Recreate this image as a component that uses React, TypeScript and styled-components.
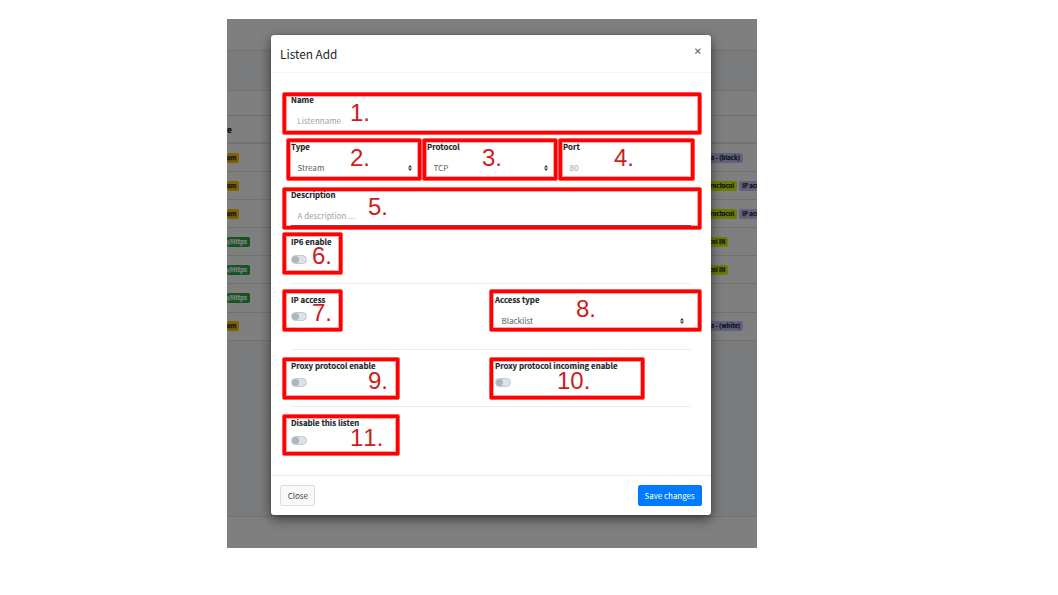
import React from "react";
import styled, { createGlobalStyle } from "styled-components";

const Global = createGlobalStyle`
  body { margin: 0; background: #fff; }
  *, *::before, *::after { box-sizing: border-box; }
`;

const Page = styled.main`
  height: 595px;
  padding: 19px 0 0 227px;
  overflow: hidden;
  font-family: "Noto Sans CJK SC", "Open Sans", sans-serif;
  color: #212529;
`;

const Screen = styled.div`
  position: relative;
  width: 530px;
  height: 529px;
  overflow: hidden;
  display: flex;
  flex-direction: column;
  background: #f4f6f9;
`;

const NavBar = styled.header`
  height: 32px;
  background: #fff;
  border-bottom: 1px solid #dee2e6;
`;

const Card = styled.section`
  margin-top: 39px;
  background: #fff;
  border-top: 1px solid #e6e6e6;
`;

const CardHeader = styled.div`
  height: 25px;
  border-bottom: 1px solid #dfdfdf;
`;

const TableHead = styled.div`
  height: 28px;
  padding-top: 3.4px;
  border-bottom: 2px solid #dee2e6;
  font-size: 8.2px;
  line-height: 20px;
  font-weight: 700;
  -webkit-text-stroke: 0.3px currentColor;
`;

const TableRow = styled.div`
  height: 28.1px;
  display: flex;
  justify-content: space-between;
  align-items: center;
  border-bottom: 1px solid #dee2e6;
`;

const TagList = styled.div`
  width: 50px;
  display: flex;
  gap: 2.5px;
`;

const Tag = styled.span<{ $bg: string; $fg?: string; $width: number }>`
  flex: none;
  display: flex;
  justify-content: flex-end;
  width: ${(p) => p.$width}px;
  height: 10px;
  padding-right: 2.6px;
  border-radius: 2px;
  background: ${(p) => p.$bg};
  color: ${(p) => p.$fg ?? "#1f2d3d"};
  font-size: 6px;
  line-height: 10.6px;
  font-weight: 700;
  -webkit-text-stroke: 0.25px currentColor;
  white-space: nowrap;
`;

const PageFooter = styled.footer`
  height: 32px;
  margin-top: auto;
  background: #fff;
  border-top: 1px solid #dee2e6;
`;

const Backdrop = styled.div`
  position: absolute;
  inset: 0;
  padding: 16px 46.4px 0 44.3px;
  background: rgba(0, 0, 0, 0.5);
`;

const Dialog = styled.div`
  height: 480px;
  display: flex;
  flex-direction: column;
  background: #fff;
  border-radius: 3px;
  box-shadow: 0 4px 12px rgba(0, 0, 0, 0.55), 0 0 1px rgba(0, 0, 0, 0.5);
`;

const DialogHeader = styled.div`
  height: 38px;
  padding: 8.6px 8.4px 0 8.7px;
  display: flex;
  justify-content: space-between;
  align-items: flex-start;
  border-bottom: 1px solid #f4f5f6;
`;

const Title = styled.h4`
  margin: 0;
  font-size: 11.8px;
  line-height: 20px;
  font-weight: 400;
`;

const CloseIcon = styled.button`
  margin: 0;
  padding: 0;
  border: 0;
  background: none;
  color: #666;
  font: 900 8.6px/14px "Noto Sans CJK SC", sans-serif;
`;

const Form = styled.form`
  flex: 1;
  padding: 20px 20px 0 19.7px;
`;

const Row = styled.div<{ $cols?: string; $height?: number }>`
  display: grid;
  grid-template-columns: ${(p) => p.$cols ?? "1fr"};
  column-gap: 8px;
  height: ${(p) => p.$height ?? 47.4}px;
`;

const Divider = styled.hr`
  height: 1px;
  margin: 0 0 9px;
  border: 0;
  background: #ececec;
`;

const Label = styled.label`
  display: block;
  height: 17px;
  font-size: 7.88px;
  line-height: 14px;
  font-weight: 700;
  -webkit-text-stroke: 0.15px currentColor;
  white-space: nowrap;
`;

const Control = styled.div<{ $placeholder?: boolean; $underline?: boolean }>`
  height: 21.3px;
  padding: 1.3px 7px 0 6.5px;
  display: flex;
  justify-content: space-between;
  align-items: center;
  border-bottom: 1px solid ${(p) => (p.$underline ? "#5d5f78" : "transparent")};
  font-size: 8px;
  line-height: 20px;
  color: ${(p) => (p.$placeholder ? "#9aa1a8" : "#565d64")};
`;

const Toggle = styled.span`
  display: block;
  width: 16px;
  height: 9px;
  margin-top: 2.4px;
  border-radius: 5px;
  background: #dee2e6;
  border: 1px solid #c3c9cf;
  &::before {
    content: "";
    display: block;
    width: 7px;
    height: 7px;
    border-radius: 50%;
    background: #adb5bd;
  }
`;

const DialogFooter = styled.div`
  height: 40px;
  padding: 9px 9px 0;
  display: flex;
  justify-content: space-between;
  align-items: flex-start;
  border-top: 1px solid #e9ecef;
`;

const Button = styled.button<{ $primary?: boolean }>`
  width: ${(p) => (p.$primary ? 64 : 35)}px;
  height: 21px;
  padding: 0;
  border: 1px solid ${(p) => (p.$primary ? "#007bff" : "#ddd")};
  border-radius: 2px;
  background: ${(p) => (p.$primary ? "#007bff" : "#f8f9fa")};
  color: ${(p) => (p.$primary ? "#fff" : "#444")};
  font: 400 7.95px/18px "Noto Sans CJK SC", sans-serif;
  white-space: nowrap;
`;

const Marker = styled.div<{ $x: number; $y: number; $w: number; $h: number }>`
  position: absolute;
  left: ${(p) => p.$x}px;
  top: ${(p) => p.$y}px;
  width: ${(p) => p.$w}px;
  height: ${(p) => p.$h}px;
  border: 1px solid rgba(255, 0, 0, 0.65);
  border-radius: 2px;
  box-shadow: inset 0 0 0 3px #f00, inset 0 0 0 4px rgba(255, 0, 0, 0.35);
`;

const MarkerNumber = styled.span<{ $x: number; $y: number }>`
  position: absolute;
  left: ${(p) => p.$x}px;
  top: ${(p) => p.$y}px;
  color: #cd1c1c;
  font: 24px/24px "Liberation Sans", Arial, sans-serif;
  font-kerning: none;
  white-space: nowrap;
`;

const tags = {
  stream: { text: "Stream", bg: "#ffc107", width: 12 },
  http: { text: "Http/Https", bg: "#28a745", fg: "#fff", width: 22.7 },
};

const lilac = "#c5c5f9";
const lime = "#d4fb00";

const rows = [
  { kind: tags.stream, access: [{ text: "IP access - (black)", bg: lilac, width: 35.5 }] },
  { kind: tags.stream, access: [{ text: "Proxy proctocol", bg: lime, width: 29.8 }, { text: "IP access", bg: lilac, width: 31.5 }] },
  { kind: tags.stream, access: [{ text: "Proxy proctocol", bg: lime, width: 29.8 }, { text: "IP access", bg: lilac, width: 31.5 }] },
  { kind: tags.http, access: [{ text: "Proxy protocol IN", bg: lime, width: 21 }] },
  { kind: tags.http, access: [{ text: "Proxy protocol IN", bg: lime, width: 21 }] },
  { kind: tags.http, access: [] },
  { kind: tags.stream, access: [{ text: "IP access - (white)", bg: lilac, width: 36 }] },
];

function Badge({ text, bg, fg, width }: { text: string; bg: string; fg?: string; width: number }) {
  return (
    <Tag $bg={bg} $fg={fg} $width={width}>
      {text}
    </Tag>
  );
}

const markers = [
  { n: 1, box: [55, 73, 420, 43], num: [123, 82] },
  { n: 2, box: [59, 119, 136, 43], num: [123, 127] },
  { n: 3, box: [195, 119, 136, 43], num: [255, 127] },
  { n: 4, box: [331, 119, 137, 43], num: [387, 127] },
  { n: 5, box: [55, 168, 420, 43], num: [141, 176] },
  { n: 6, box: [55, 213, 61, 43], num: [85, 225] },
  { n: 7, box: [55, 270, 61, 43], num: [85, 282] },
  { n: 8, box: [262, 270, 213, 43], num: [349, 278] },
  { n: 9, box: [55, 338, 118, 43], num: [141, 350] },
  { n: 10, box: [262, 338, 156, 43], num: [330, 350] },
  { n: 11, box: [55, 395, 118, 42], num: [123, 407] },
];

function Select({ value }: { value: string }) {
  return (
    <Control>
      {value}
      <svg width="4" height="6" viewBox="0 0 4 6" fill="#343a40">
        <path d="M0 2.5 2 0l2 2.5zM0 3.5 2 6l2-2.5z" />
      </svg>
    </Control>
  );
}

function Switch({ label }: { label: string }) {
  return (
    <div>
      <Label>{label}</Label>
      <Toggle />
    </div>
  );
}

export default function App() {
  return (
    <Page>
      <Global />
      <Screen>
        <NavBar />
        <Card>
          <CardHeader />
          <TableHead>e</TableHead>
          {rows.map((row, i) => (
            <TableRow key={i}>
              <Badge {...row.kind} />
              <TagList>
                {row.access.map((tag) => (
                  <Badge key={tag.text} {...tag} />
                ))}
              </TagList>
            </TableRow>
          ))}
        </Card>
        <PageFooter />
        <Backdrop>
          <Dialog>
            <DialogHeader>
              <Title>Listen Add</Title>
              <CloseIcon>×</CloseIcon>
            </DialogHeader>
            <Form>
              <Row>
                <div>
                  <Label>Name</Label>
                  <Control $placeholder>Listenname</Control>
                </div>
              </Row>
              <Row $cols="128px 128px 128px">
                <div>
                  <Label>Type</Label>
                  <Select value="Stream" />
                </div>
                <div>
                  <Label>Protocol</Label>
                  <Select value="TCP" />
                </div>
                <div>
                  <Label>Port</Label>
                  <Control $placeholder>80</Control>
                </div>
              </Row>
              <Row>
                <div>
                  <Label>Description</Label>
                  <Control $placeholder $underline>A description ...</Control>
                </div>
              </Row>
              <Row $height={47.8}>
                <Switch label="IP6 enable" />
              </Row>
              <Divider />
              <Row $cols="196px 196px" $height={55.8}>
                <Switch label="IP access" />
                <div>
                  <Label>Access type</Label>
                  <Select value="Blacklist" />
                </div>
              </Row>
              <Divider />
              <Row $cols="196px 196px" $height={47.6}>
                <Switch label="Proxy protocol enable" />
                <Switch label="Proxy protocol incoming enable" />
              </Row>
              <Divider />
              <Row>
                <Switch label="Disable this listen" />
              </Row>
            </Form>
            <DialogFooter>
              <Button>Close</Button>
              <Button $primary>Save changes</Button>
            </DialogFooter>
          </Dialog>
        </Backdrop>
        {markers.map(({ n, box, num }) => (
          <React.Fragment key={n}>
            <Marker $x={box[0]} $y={box[1]} $w={box[2]} $h={box[3]} />
            <MarkerNumber $x={num[0]} $y={num[1]}>
              {n}.
            </MarkerNumber>
          </React.Fragment>
        ))}
      </Screen>
    </Page>
  );
}
